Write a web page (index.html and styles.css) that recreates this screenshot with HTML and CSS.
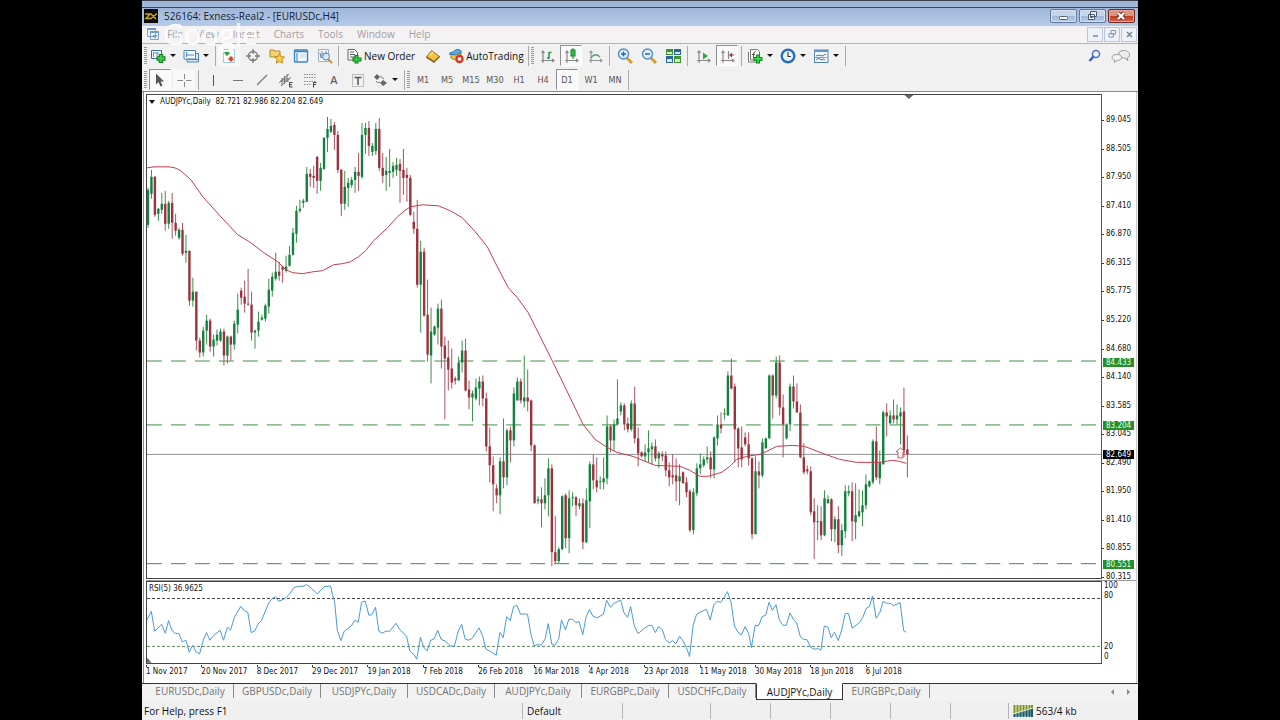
FILE: index.html
```html
<!DOCTYPE html>
<html lang="en">
<head>
<meta charset="utf-8">
<title>526164: Exness-Real2 - [EURUSDc,H4]</title>
<link rel="stylesheet" href="styles.css">
</head>
<body>
<main class="app">
  <div class="top-strip"></div>
  <header class="titlebar">
    <svg class="logo" viewBox="0 0 14 14"><rect width="14" height="14" fill="#0b0a05"/><path d="M1 5h5l-4 4.500h5L13 4.500M7 5l5 5" stroke="#c9a70c" stroke-width="1.500" fill="none"/></svg>
    <h1 class="title">526164: Exness-Real2 - [EURUSDc,H4]</h1>
    <div class="win-buttons">
      <button class="win" aria-label="Minimize"><svg viewBox="0 0 24 12"><rect x="8.500" y="6.500" width="8" height="3" rx="1" fill="#fff" stroke="#50607a"/></svg></button>
      <button class="win" aria-label="Restore"><svg viewBox="0 0 24 12"><path d="M10.500 1.500h6v5h-6zM8.500 4.500h6v5h-6z" fill="#eef3fa" stroke="#4a5970"/><path d="M10.500 6.500h2v1h-2z" stroke="#4a5970" fill="none"/></svg></button>
      <button class="win close" aria-label="Close"><svg viewBox="0 0 24 12"><path d="M9 3l6 6M15 3l-6 6" stroke="#5a3030" stroke-width="4"/><path d="M9 3l6 6M15 3l-6 6" stroke="#fff" stroke-width="2.400"/></svg></button>
    </div>
  </header>
  <nav class="menubar">
    <svg class="menu-icon" viewBox="0 0 14 14"><path d="M1.500 1.500h8v8h-8zM4.500 4.500h8v8h-8z" fill="#eef4fb" stroke="#7ba3cf"/><path d="M1 2h9M4 5h9" stroke="#6f9bd0" stroke-width="2"/><path d="M6 10l2-2 1 3 2-3" stroke="#6a8fb8" fill="none"/></svg>
    <button>File</button><button>View</button><button>Insert</button><button>Charts</button><button>Tools</button><button>Window</button><button>Help</button>
    <span class="watermark">Google</span>
    <div class="mdi">
      <button aria-label="Minimize chart"><svg viewBox="0 0 12 12"><path d="M4 8h5" stroke="#7789a3" stroke-width="1.500"/></svg></button>
      <button aria-label="Restore chart"><svg viewBox="0 0 12 12"><path d="M5 2.500h4.500v3.500h-4.500zM3 5.500h4.500v3.500h-4.500z" fill="#f4f7fb" stroke="#8595ab"/></svg></button>
      <button aria-label="Close chart"><svg viewBox="0 0 12 12"><path d="M4 4l5 5M9 4l-5 5" stroke="#73849b" stroke-width="1.500"/></svg></button>
    </div>
  </nav>
  <div class="toolbars">
    <div class="toolbar">
      <i class="grip"></i>
      <button class="dd" aria-label="New chart"><svg viewBox="0 0 16 16"><path d="M1.500 2.500h10v8h-10z" fill="#f4f9fd" stroke="#3e6f9c"/><path d="M3.500 4v5M7 4v4M3 5h6" stroke="#6f93b5" fill="none"/><path d="M11 6v9M6.500 10.500h9" stroke="#0c7a1c" stroke-width="4.500"/><path d="M11 7v7M7.500 10.500h7" stroke="#3bc94a" stroke-width="2.500"/></svg><b></b></button>
      <button class="dd" aria-label="Profiles"><svg viewBox="0 0 16 16"><path d="M4 5.500h11.500v8.500H4z" fill="#d8e8f5" stroke="#4d82b4"/><path d="M1 2.500h11.500v8.500H1z" fill="#f6fafd" stroke="#4d82b4"/><path d="M3.500 4v5M3 7h8M5 11.500h10" stroke="#4e83b7"/></svg><b></b></button>
      <i class="sep"></i>
      <button class="tb lit" aria-label="Market watch"><svg viewBox="0 0 16 16"><path d="M2.500 1.500h11v13h-11z" fill="#fff" stroke="#7fb0d8" stroke-dasharray="2 1"/><path d="M6 2l3.500 3.500H7.500v2h-3v-2H2.500z" fill="#26a13b"/><path d="M10 14l3.500-3.500H11.500v-2h-3v2H6.500z" fill="#d1462c"/></svg></button>
      <button class="tb" aria-label="Data window"><svg viewBox="0 0 16 16"><circle cx="8" cy="8" r="4.500" fill="none" stroke="#777" stroke-width="1.300"/><path d="M8 1v5M8 10v5M1 8h5M10 8h5" stroke="#777" stroke-width="1.300"/></svg></button>
      <button class="tb" aria-label="Navigator"><svg viewBox="0 0 16 16"><path d="M1 2h4l1 1h5v6H1z" fill="#f2d170" stroke="#b58b2a"/><path d="M10.500 5.500l1.500 3.200 3.500.4-2.600 2.400.7 3.500-3.100-1.700L7.400 15l.7-3.500-2.600-2.400 3.500-.4z" fill="#fbd244" stroke="#bd8417"/></svg></button>
      <button class="tb" aria-label="Terminal"><svg viewBox="0 0 16 16"><rect x="1.500" y="2" width="13" height="12" rx="1" fill="#f3faff" stroke="#3e84c2" stroke-width="1.400"/><path d="M2 3.500h12" stroke="#3e84c2" stroke-width="1.500"/><path d="M3 5h2v8H3z" fill="#7fbbe6"/><path d="M7 7h6M7 9h6" stroke="#c2d3e0"/></svg></button>
      <button class="tb" aria-label="Strategy tester"><svg viewBox="0 0 16 16"><path d="M1.500 1.500h10v12h-10z" fill="#f2f6fa" stroke="#9cb0c4"/><path d="M3 5l1 5M5 3v7M7 5v4M9 3v5" stroke="#6785a5"/><circle cx="9" cy="8.500" r="3.500" fill="#d7ebf8" fill-opacity=".8" stroke="#5b84b6"/><path d="M11.500 11.500l3.500 3.500" stroke="#c69033" stroke-width="2"/></svg></button>
      <i class="sep"></i>
      <button class="tb text order"><svg viewBox="0 0 16 16"><path d="M2 1.500h6.500l3 3V12H2z" fill="#fff" stroke="#666"/><path d="M4 4h4M4 6.500h5M4 9h5" stroke="#555"/><path d="M10.500 7v8.500M6.500 11.500h9" stroke="#0c7a1c" stroke-width="4"/><path d="M10.500 8v6.500M7.500 11.500h7" stroke="#3bc94a" stroke-width="2"/></svg>New Order</button>
      <button class="tb" aria-label="MetaEditor"><svg viewBox="0 0 16 16"><path d="M1.500 9l5-6.500 8 6-5.500 5.500z" fill="#f2c443" stroke="#a5731b"/><path d="M1.500 9l7.500 5 5.500-5.500" fill="none" stroke="#8d6317" stroke-width="1.600"/><path d="M5 8l3-4" stroke="#fff0b2"/></svg></button>
      <button class="tb text"><svg viewBox="0 0 16 16"><path d="M3 6l10-1v5q-5 4-10 0z" fill="#e6bf46" stroke="#a7812a"/><path d="M1 6q1-2 4-2 3-4 7-2 2 1 1 3-6 3-12 1z" fill="#5eaee0" stroke="#3077ad"/><circle cx="11.500" cy="11" r="4.200" fill="#d93120"/><rect x="9.800" y="9.500" width="3.400" height="3" fill="#fff"/></svg>AutoTrading</button>
      <i class="sep"></i><i class="grip"></i>
      <button class="tb" aria-label="Bar chart"><svg viewBox="0 0 16 16"><path d="M4 3v12M2 12.500h13M2.500 5L4 3l1.500 2M13 11l2 1.500-2 1.500" fill="none" stroke="#888" stroke-width="1.200"/><path d="M10 4v7M8 10h2M10 4.500h2.500" stroke="#2d9445" stroke-width="1.500"/></svg></button>
      <button class="tb pressed" aria-label="Candlesticks"><svg viewBox="0 0 16 16"><path d="M4 3v12M2 12.500h13M2.500 5L4 3l1.500 2M13 11l2 1.500-2 1.500" fill="none" stroke="#888" stroke-width="1.200"/><path d="M10 0v11" stroke="#187a2d"/><rect x="8" y="2" width="4" height="6" fill="#33bd4c" stroke="#187a2d"/></svg></button>
      <button class="tb" aria-label="Line chart"><svg viewBox="0 0 16 16"><path d="M4 3v12M2 12.500h13M2.500 5L4 3l1.500 2M13 11l2 1.500-2 1.500" fill="none" stroke="#999" stroke-width="1.200"/><path d="M4 10q4-6 9-1" fill="none" stroke="#5a9c67" stroke-width="1.300"/></svg></button>
      <i class="sep wide"></i>
      <button class="tb" aria-label="Zoom in"><svg viewBox="0 0 16 16"><path d="M10 10l5 5" stroke="#d3a02c" stroke-width="3"/><circle cx="6.500" cy="6" r="5" fill="#dff0fc" stroke="#4f8ccb" stroke-width="1.400"/><path d="M6.500 3.500v5M4 6h5" stroke="#2a66ae" stroke-width="1.500"/></svg></button>
      <button class="tb" aria-label="Zoom out"><svg viewBox="0 0 16 16"><path d="M10 10l5 5" stroke="#d3a02c" stroke-width="3"/><circle cx="6.500" cy="6" r="5" fill="#dff0fc" stroke="#4f8ccb" stroke-width="1.400"/><path d="M4 6h5" stroke="#2a66ae" stroke-width="1.500"/></svg></button>
      <button class="tb" aria-label="Tile windows"><svg viewBox="0 0 16 16"><path d="M1 1h7v6H1zM9 8h7v7H9z" fill="#3f9430"/><path d="M9 1h7v6H9zM1 8h7v7H1z" fill="#2c64a8"/><path d="M2 4h5v2H2zM10 4h5v2h-5zM2 11h5v3H2zM10 11h5v3h-5z" fill="#d8ecd4"/></svg></button>
      <i class="sep wide"></i>
      <button class="tb" aria-label="Auto scroll"><svg viewBox="0 0 16 16"><path d="M4 3v12M2 12.500h13M2.500 5L4 3l1.500 2M13 11l2 1.500-2 1.500" fill="none" stroke="#888" stroke-width="1.200"/><path d="M8 4.500l5 3.500-5 3.500z" fill="#35a44b"/></svg></button>
      <button class="tb pressed" aria-label="Chart shift"><svg viewBox="0 0 16 16"><path d="M4 3v12M2 12.500h13M2.500 5L4 3l1.500 2M13 11l2 1.500-2 1.500M9.500 3v8" fill="none" stroke="#888" stroke-width="1.200"/><path d="M15 7h-3" stroke="#a33"/><path d="M10 7l3-2.500v5z" fill="#a33b3b"/></svg></button>
      <i class="sep wide"></i>
      <button class="dd" aria-label="Indicators"><svg viewBox="0 0 16 16"><path d="M3.500 1.500h7l2 2V12h-9zM1.500 4v10h8" fill="#fff" stroke="#777"/><path d="M8.500 3.500q-2 0-2 3v4M5 6.500h3" fill="none" stroke="#555"/><path d="M11 6.500v9M6.500 11h9" stroke="#0c8a1c" stroke-width="4"/><path d="M11 7.500v7M7.500 11h7" stroke="#3bd04a" stroke-width="2"/></svg><b></b></button>
      <button class="dd" aria-label="Periods"><svg viewBox="0 0 16 16"><circle cx="8" cy="8" r="6.300" fill="#e9f5fd" stroke="#2a6eb8" stroke-width="2.400"/><path d="M8 4v4.500h3" fill="none" stroke="#345" stroke-width="1.200"/></svg><b></b></button>
      <button class="dd" aria-label="Templates"><svg viewBox="0 0 16 16"><rect x="1.500" y="2" width="13.500" height="12.500" fill="#f2f8fc" stroke="#5386b4"/><path d="M1.500 3h13.500" stroke="#5c96cb" stroke-width="2"/><path d="M3 8l3-1 3 1 4-2M3 12l3-2 2 2 2-1 2 1" fill="none" stroke="#56789a"/><path d="M2 9.500h12" stroke="#7eb07f"/></svg><b></b></button>
      <i class="sep"></i>
      <span class="spacer"></span>
      <button class="tb" aria-label="Search"><svg viewBox="0 0 16 16"><circle cx="9" cy="6" r="3.500" fill="#f3f7ff" stroke="#4a70c8" stroke-width="1.500"/><path d="M6.500 8.500L2.500 13" stroke="#3158b8" stroke-width="2.200"/></svg></button>
      <button class="tb chat" aria-label="Chat"><svg viewBox="0 0 20 16"><path d="M12 2.500c4 0 6.500 1.500 6.500 4S17 10 16 10l1 2.500L13.500 10C9 10 7.500 8.500 7.500 6.500s1.500-4 4.500-4z" fill="#eee" stroke="#999"/><path d="M6 6.500c3 0 4.500 1 4.500 3s-2 3-4.500 3L3.500 14.500l0-2.500C2 11.500 1 11 1 9.500c0-2 2-3 5-3z" fill="#f5f5f5" stroke="#999"/></svg></button>
    </div>
    <div class="toolbar">
      <i class="grip"></i>
      <button class="tb pressed" aria-label="Cursor"><svg viewBox="0 0 16 16"><path d="M4 1.500v11l2.500-2.500 2 4.500 2-1-2-4h3.500z" fill="#555"/></svg></button>
      <button class="tb lit" aria-label="Crosshair"><svg viewBox="0 0 16 16"><path d="M8.500 2v5M8.500 10v5M1.500 8.500H7M10 8.500h5.500" stroke="#888"/></svg></button>
      <i class="sep wide"></i>
      <button class="tb" aria-label="Vertical line"><svg viewBox="0 0 16 16"><path d="M7.500 3v11" stroke="#555"/></svg></button>
      <button class="tb" aria-label="Horizontal line"><svg viewBox="0 0 16 16"><path d="M3 8.500h10" stroke="#777"/></svg></button>
      <button class="tb" aria-label="Trendline"><svg viewBox="0 0 16 16"><path d="M3 13L13 3" stroke="#777" stroke-width="1.200"/></svg></button>
      <button class="tb" aria-label="Equidistant channel"><svg viewBox="0 0 16 16"><path d="M1 11l10-9M3 14l10-9M4 6v7M6.500 4v8M9 2v8M2 9h9M4 7h8" stroke="#777"/><path d="M14.500 10.500h-3v4.500h3M11.500 12.700h2.500" fill="none" stroke="#444"/></svg></button>
      <button class="tb" aria-label="Fibonacci retracement"><svg viewBox="0 0 16 16"><path d="M2 2.500h12M2 5.500h12M2 9.500h12M2 12.500h7" stroke="#888" stroke-dasharray="1.500 1"/><path d="M11.500 15.500v-5h3M11.500 12.500h2.500" fill="none" stroke="#444"/></svg></button>
      <button class="tb bold">A</button>
      <button class="tb" aria-label="Text label"><svg viewBox="0 0 16 16"><rect x="2.500" y="2.500" width="11" height="12" fill="none" stroke="#888" stroke-dasharray="1 1"/><path d="M4.500 5.500h7M8 5v8" stroke="#555" stroke-width="1.500"/></svg></button>
      <button class="dd" aria-label="Arrows"><svg viewBox="0 0 16 16"><path d="M2 5l3-3 3 3-3 3zM8 11l3-3 4 3-4 3z" fill="#666"/><path d="M4 9q1 3 4 1M8 4l4 3" fill="none" stroke="#777"/></svg><b></b></button>
      <i class="sep"></i><i class="grip"></i>
      <button class="tb tf">M1</button><button class="tb tf">M5</button><button class="tb tf">M15</button><button class="tb tf">M30</button><button class="tb tf">H1</button><button class="tb tf">H4</button><button class="tb tf pressed">D1</button><button class="tb tf">W1</button><button class="tb tf">MN</button>
      <i class="sep"></i>
    </div>
  </div>

  <section class="chart">
    <div class="pane price">
      <div class="plot">
        <svg class="drawing" viewBox="146 95 956 484" preserveAspectRatio="none">
          <path class="level" d="M146 361.500H1102M146 425.500H1102M146 564.500H1102"/>
          <path class="bid" d="M146 455H1102"/>
          <g id="candles"></g>
          <polyline class="ma" points="146,168 153,167 168,167 174,168 180,171 190,180 202,197 220,217 237,235 250,243 263,253 277,262 285,270 292,273 302,274 313,272 322,271 333,265 342,264 350,262 358,257 365,251 373,241 387,228 397,217 404,211 410,207 422,205 438,206 450,211 462,218 475,232 487,247 497,267 508,288 517,298 528,313 552,361 583,425 595,440 607,448 617,453 633,457 655,466 680,467 690,471 700,477 708,477 722,473 730,467 737,460 747,457 760,455 767,452 777,447 793,446 805,447 823,454 840,460 857,463 880,463 893,461 900,462 907,464"/>
          <path class="signal" d="M901 448.500l4.500 4h-2v6h-5v-6h-2z"/>
          <path d="M905 95h9l-4.500 4z" fill="#666"/>
        </svg>
        <p class="caption"><b></b>AUDJPYc,Daily&nbsp; 82.721 82.986 82.204 82.649</p>
      </div>
      <div class="axis">
        <span>89.045</span><span>88.505</span><span>87.950</span><span>87.410</span><span>86.870</span><span>86.315</span><span>85.775</span><span>85.220</span><span>84.680</span><span>84.140</span><span>83.585</span><span>83.045</span><span>82.490</span><span>81.950</span><span>81.410</span><span>80.855</span><span>80.315</span>
        <em class="tag t1">84.433</em><em class="tag t2">83.204</em><em class="tag t3">82.649</em><em class="tag t4">80.551</em>
      </div>
    </div>
    <div class="pane rsi">
      <div class="plot">
        <svg class="drawing" viewBox="18 36 2868 243" preserveAspectRatio="none">
          <path class="bound" d="M18 85.500H2886"/><path class="bound low" d="M18 229.500H2886"/>
          <polyline class="osc" points="18,150 31,124 41,184 62,163 73,190 83,152 93,182 103,190 114,191 124,216 135,211 145,247 155,226 166,247 176,252 187,211 197,188 207,211 218,197 238,181 248,211 260,171 269,181 281,142 300,109 311,123 321,127 331,188 342,183 352,162 362,152 384,99 394,86 404,80 414,94 432,86 446,73 460,53 472,49 487,49 497,44 508,51 530,72 551,50 570,48 575,72 582,95 590,180 601,212 611,184 632,168 643,151 653,157 663,97 674,93 685,136 694,134 705,112 715,184 725,190 736,184 747,184 767,160 777,178 798,198 808,243 819,252 829,268 840,202 850,232 860,243 871,211 881,207 892,181 902,208 915,214 930,228 942,229 954,183 964,163 974,206 984,211 995,206 1016,174 1027,198 1037,238 1048,243 1068,256 1079,188 1089,203 1099,140 1110,152 1120,110 1130,106 1141,133 1152,132 1162,133"/>
          <polyline class="osc" transform="translate(1140)" points="22,133 32,193 42,228 52,224 63,226 75,207 84,161 95,223 105,226 116,206 124,150 136,180 146,148 158,148 167,158 177,155 188,194 198,141 208,119 218,138 230,144 250,133 260,91 271,112 281,101 302,90 312,129 323,142 332,110 343,168 354,191 375,174 386,167 396,166 406,188 416,170 427,179 437,209 448,219 458,212 468,222 479,199 489,212 499,232 509,260 520,165 530,134 540,127 560,118 571,150 582,105 592,94 603,97 613,81 623,65 634,97 644,168 655,187 665,195 676,170 687,192 695,233 706,167 717,167 727,140 738,136 748,97 758,121 769,104 779,150 790,166 800,166 811,129 821,148 831,159 842,200 852,209 862,209 873,232 884,238 895,236 904,241 914,168 925,172 935,203 945,187 956,212 967,178 977,131 987,131 998,175 1010,165 1020,158 1030,142 1040,115 1050,110 1059,78 1070,145 1081,128 1091,94 1101,100 1112,100 1122,107 1142,98 1153,183 1160,187"/>
          <path d="M18 264l14 15H18z" fill="#666"/>
        </svg>
        <p class="caption">RSI(5) 36.9625</p>
      </div>
      <div class="axis"><span>100</span><span>80</span><span class="gap">20</span><span>0</span></div>
    </div>
    <div class="dates">
      <span>1 Nov 2017</span><span>20 Nov 2017</span><span>8 Dec 2017</span><span>29 Dec 2017</span><span>19 Jan 2018</span><span>7 Feb 2018</span><span>26 Feb 2018</span><span>16 Mar 2018</span><span>4 Apr 2018</span><span>23 Apr 2018</span><span>11 May 2018</span><span>30 May 2018</span><span>18 Jun 2018</span><span>6 Jul 2018</span>
    </div>
  </section>

  <nav class="tabs">
    <button>EURUSDc,Daily</button><button>GBPUSDc,Daily</button><button>USDJPYc,Daily</button><button>USDCADc,Daily</button><button>AUDJPYc,Daily</button><button>EURGBPc,Daily</button><button>USDCHFc,Daily</button><button class="active">AUDJPYc,Daily</button><button>EURGBPc,Daily</button>
    <div class="scroll"><button class="left" aria-label="Scroll left"></button><button class="right" aria-label="Scroll right"></button></div>
  </nav>
  <footer class="status">
    <span class="help">For Help, press F1</span><span class="profile">Default</span><span class="c3"></span><span class="c4"></span><span class="c4"></span><span class="c4"></span><span class="c4"></span><span class="c5"></span>
    <span class="net"><svg viewBox="0 0 20 12"><path d="M1.500 0v11M4.500 0v11M7.500 0v11M10.500 0v11M13.500 0v11M16.500 0v11M19 0v11" stroke="#7d9417" stroke-width="2"/><path d="M1.500 9v3M4.500 8v4M7.500 7v5M10.500 6v6M13.500 5v7M16.500 4v8M19 3v9" stroke="#155a80" stroke-width="2"/><path d="M0 9l20-6" stroke="#e4ecd0"/></svg>563/4 kb</span>
  </footer>
</main>
<script src="chart.js"></script>
</body>
</html>
```

FILE: styles.css
```css
* { box-sizing: border-box; }
body { margin: 0; background: #000; font-family: "Open Sans", "Noto Sans", sans-serif; font-size: 11px; color: #111; }
button { font: inherit; color: inherit; background: none; border: 0; padding: 0; margin: 0; }
svg { display: block; }
.app { max-width: 996px; height: 100vh; min-height: 480px; margin: 0 auto; display: flex; flex-direction: column; background: #f0f0f0; }
.top-strip { height: 8px; flex: none; background: #9db5d6; border-top: 1px solid #3d3f4c; border-bottom: 1px solid #3b4658; }

.titlebar { height: 18px; flex: none; display: flex; align-items: center; padding: 0 3px 2px 2px; background: linear-gradient(#a1b7da, #b4cbe8); }
.logo { width: 14px; height: 14px; }
.title { flex: 1; margin: 0 0 0 6px; font-size: 10px; font-weight: 400; line-height: 16px; color: #15202e; }
.win-buttons { display: flex; gap: 2px; }
.win { width: 27px; height: 14px; border: 1px solid #62779a; border-radius: 2px; background: linear-gradient(#c5d5ea 50%, #9fb6d6 50%, #b8cce6); box-shadow: inset 0 0 0 1px #d4e0f0; }
.win svg { width: 24px; height: 12px; }
.close { border-color: #6b2b28; background: linear-gradient(#e0937f 50%, #c23d23 50%, #d5664a); box-shadow: inset 0 0 0 1px #e9a797; }

.menubar { position: relative; height: 18px; flex: none; display: flex; align-items: center; padding: 0 0 1px 4px; background: #f5f2f3; border-bottom: 1px solid #b1b4b1; color: #a09ea0; font-size: 10px; }
.menu-icon { width: 14px; height: 14px; }
.menubar > button { padding: 0 7px; line-height: 16px; }
.watermark { position: absolute; left: 21px; top: -8px; font-size: 29px; line-height: 32px; color: #fff; opacity: .9; }
.mdi { margin-left: auto; display: flex; gap: 1px; padding-right: 1px; }
.mdi button { width: 16px; height: 15px; border: 1px solid #b9c6d8; background: #edf2fa; }
.mdi svg { width: 12px; height: 12px; margin: 0 auto; }

.toolbars { flex: none; display: grid; gap: 1px; background: #f2f1f1; border-bottom: 1px solid #8b8b8b; }
.toolbar { height: 23px; display: flex; align-items: center; gap: 2px; padding: 0 4px 0 2px; }
.grip { width: 3px; height: 18px; background: repeating-linear-gradient(#999 0 1px, #f2f1f1 1px 2px); }
.sep { width: 1px; height: 20px; background: #aaa; }
.wide { margin: 0 2px 0 1px; }
.tb { width: 22px; height: 21px; flex: none; display: flex; align-items: center; justify-content: center; border: 1px solid transparent; }
.tb svg, .dd svg { width: 16px; height: 16px; flex: none; }
.dd { width: 31px; height: 21px; flex: none; display: flex; align-items: center; gap: 4px; padding-left: 1px; }
.dd b { border: 3px solid transparent; border-top-color: #111; border-bottom: 0; }
.pressed { background: #f9f9f9; border-color: #8e8e8e #fff #fff #8e8e8e; }
.lit { background: #f8f8f8; }
.text { width: auto; gap: 2px; padding: 0 1px; font-size: 10px; }
.order { padding: 0 4px; }
.bold { font-weight: 600; color: #666; }
.tf { font-family: "DejaVu Sans Condensed", sans-serif; font-size: 9px; color: #555; }
.spacer { flex: 1; }
.chat { width: 26px; }
.chat svg { width: 20px; }

.chart { flex: 1; min-height: 0; margin: 0 1px; padding: 2px 0 0 2px; display: flex; flex-direction: column; background: #fff; border-left: 1px solid #8b8b8b; border-right: 1px solid #ccc; font-family: "DejaVu Sans Condensed", sans-serif; font-size: 8px; }
.pane { display: flex; min-height: 0; }
.price { flex: 486; }
.rsi { flex: 83; margin-top: 1px; border-top: 1px solid #999; }
.plot { position: relative; flex: 1; border: 1px solid #444; border-right-color: #555; min-width: 0; }
.drawing { position: absolute; inset: 0; width: 100%; height: 100%; }
.caption { position: relative; margin: 2px 0 0 2px; display: flex; align-items: center; line-height: 10px; white-space: pre; }
.caption b { border: 3px solid transparent; border-top: 4px solid #111; border-bottom: 0; margin: 0 5px 0 0; }
.level { fill: none; stroke: #3f8f45; stroke-dasharray: 15 9; }
.bid { stroke: #8d9094; fill: none; }
.ma { fill: none; stroke: #c83a4c; stroke-width: 1; }
.signal { fill: #fff; stroke: #d0505a; }
.up { fill: #12803f; }
.down { fill: #9b323c; }
.up-wick { fill: #3b9149; }
.down-wick { fill: #ab5461; }
.bound, .osc { fill: none; vector-effect: non-scaling-stroke; stroke-width: 1; }
.bound { stroke: #444; stroke-dasharray: 3 2; }
.low { stroke: #5b8a5b; }
.osc { stroke: #4b9ad6; }

.axis { position: relative; width: 34px; flex: none; display: flex; flex-direction: column; justify-content: space-between; line-height: 10px; padding-left: 4px; }
.price .axis { padding-top: 21px; margin-bottom: -3px; }
.price .axis span::before { content: ""; float: left; width: 2px; height: 1px; margin: 5px 0 0 -4px; background: #333; }
.rsi .axis { justify-content: flex-start; padding: 0 0 2px 2px; }
.rsi .gap { margin-top: auto; }
.tag { position: absolute; left: 1px; width: 31px; height: 9px; padding-left: 3px; line-height: 9px; font-style: normal; color: #e8ffe8; background: #259029; }
.t1 { top: 54%; }
.t2 { top: 67%; }
.t3 { top: 73%; background: #000; color: #fff; }
.t4 { bottom: 13px; }

.dates { height: 19px; flex: none; display: grid; grid-template-columns: repeat(14, 1fr); padding-right: 215px; line-height: 10px; white-space: nowrap; }
.dates span { padding-top: 1px; }
.dates span::before { content: ""; display: block; width: 1px; height: 2px; background: #333; }

.tabs { height: 17px; flex: none; display: flex; border-top: 1px solid #333; padding-left: 5px; color: #747474; background: #f2f2f2; font-size: 10px; }
.tabs > button { flex: none; width: 87px; line-height: 14px; border-right: 1px solid #888; margin-bottom: 2px; }
.tabs > .active { margin: -1px 0 0; color: #111; background: #fff; border: 1px solid #333; border-top-color: #fff; }
.scroll { margin-left: auto; display: flex; align-items: center; gap: 13px; padding-right: 8px; }
.scroll button { border: 3px solid transparent; }
.scroll .left { border-right-color: #888; border-left: 0; }
.scroll .right { border-left-color: #888; border-right: 0; }

.status { height: 20px; flex: none; display: flex; align-items: stretch; padding: 3px 0 1px 2px; background: #f0f0f0; font-size: 10px; line-height: 16px; }
.status span { border-right: 1px solid #b5b5b5; }
.help { width: 379px; }
.profile { width: 100px; padding-left: 4px; }
.c3 { width: 88px; }
.c4 { width: 60px; }
.c5 { width: 58px; }
.status .net { display: flex; align-items: center; gap: 3px; padding-left: 4px; border: 0; }
.net svg { width: 20px; height: 12px; }
```

FILE: chart.js
```js
// Each bar: direction, high, body top, body bottom, low (chart units, downwards).
const bars = `u 188 190 225 228;u 170 177 194 199;d 176 177 215 217;u 208 209 214 221;u 193 204 210 214;d 191 204 224 231;u 201 203 224 229;d 193 203 223 239;d 214 223 231 236;u 228 230 238 240
d 223 230 254 256;u 235 251 253 263;d 251 251 301 306;u 278 292 301 307;d 292 292 341 351;d 338 341 353 358;u 327 331 353 357;u 315 321 331 345;d 319 321 347 352;u 335 340 347 357
u 330 335 341 346;u 329 332 341 342;d 329 332 356 366;u 336 337 356 364;d 336 337 345 361;u 321 324 345 350;u 294 310 325 334;d 288 291 298 305;d 281 297 304 313;d 269 304 305 306
d 292 305 333 341;u 330 331 333 349;u 312 322 331 337;u 315 318 320 321;u 304 306 319 322;u 279 290 307 314;u 273 277 291 297;u 253 272 279 281;d 262 272 276 281;d 266 267 270 283
u 256 267 271 273;u 246 255 266 267;u 228 233 255 256;u 206 211 234 243;u 200 209 211 213;u 199 201 203 208;u 167 174 202 202;d 169 174 177 187;d 166 176 178 188;d 156 157 181 194
u 163 168 181 191;u 137 138 169 170;u 117 129 138 152;u 119 126 132 133;d 122 125 135 150;d 131 135 170 173;d 169 170 204 216;u 171 187 204 210;u 178 183 188 207;u 177 180 185 188
u 167 172 180 193;d 153 172 176 191;u 123 135 177 179;u 123 128 135 154;d 121 128 146 156;u 143 146 152 156;u 123 129 151 155;d 118 129 168 171;d 153 168 176 183;u 157 171 175 191
u 149 171 173 187;u 162 166 172 178;u 158 165 170 176;d 159 164 171 203;d 149 170 178 195;d 168 175 178 202;d 175 178 215 216;d 212 222 229 234;d 200 229 285 288;u 241 252 285 333
d 248 252 316 317;d 280 315 355 362;u 308 332 356 384;u 326 327 335 336;u 304 309 328 345;d 300 309 347 369;d 337 346 359 420;d 341 358 370 391;d 349 369 383 389;d 377 379 381 385
u 357 363 381 381;u 341 351 363 373;d 339 351 391 392;d 381 390 398 410;u 391 394 398 422;u 379 388 399 401;u 377 382 389 406;d 376 382 399 407;d 393 399 447 452;d 428 447 466 483
d 457 466 485 512;d 485 489 496 504;u 458 462 496 515;d 419 462 478 489;u 429 431 478 486;d 427 431 441 463;u 388 394 441 447;u 378 382 401 401;d 379 382 401 404;u 356 398 402 408
d 370 398 402 412;d 400 401 446 452;d 445 446 504 504;u 497 500 502 505;d 488 500 504 528;u 479 496 504 510;u 459 469 496 517;d 465 469 553 567;d 517 553 562 565;u 548 550 562 564
u 496 497 550 551;d 494 496 539 549;u 491 499 539 554;u 493 498 499 507;d 497 498 506 517;u 499 504 507 510;d 499 504 543 550;u 489 501 543 544;u 462 465 502 529;d 455 465 481 490
d 458 481 488 493;u 477 482 483 490;u 458 479 483 490;u 416 427 479 485;d 425 427 441 453;u 420 425 441 452;u 380 419 425 426;u 403 406 412 416;d 404 406 425 431;d 418 424 430 433
u 401 404 430 432;d 387 404 439 444;d 428 439 454 467;d 452 453 457 458;u 445 453 457 462;u 431 449 453 463;u 443 447 450 465;d 440 447 459 462;u 452 454 459 469;d 452 455 457 462
d 452 456 471 477;d 463 471 478 487;d 455 476 478 485;d 459 476 482 502;u 465 477 482 506;d 472 473 484 484;d 478 483 493 498;d 490 492 531 533;u 489 493 531 535;u 464 469 494 497
u 454 465 469 475;u 457 460 466 468;u 447 458 460 464;d 452 458 470 479;u 437 438 470 479;u 416 425 439 446;d 413 425 429 434;u 409 414 415 420;u 372 376 416 416;d 359 376 389 390
d 384 387 430 463;d 428 429 449 468;d 427 448 460 468;d 433 438 445 447;d 433 445 459 466;d 458 459 535 540;u 457 472 535 535;d 462 472 476 489;u 439 443 476 478;u 438 439 449 449
u 375 376 439 439;d 375 376 396 419;u 357 363 396 399;d 356 363 408 416;d 395 408 425 458;u 424 425 439 440;u 384 387 425 432;d 376 387 402 409;d 384 402 413 413;d 405 413 458 459
d 444 458 473 475;d 466 470 472 475;d 467 472 513 516;d 499 512 523 560;u 506 522 523 541;d 507 522 536 541;u 491 499 536 537;u 496 500 504 504;d 499 500 530 542;u 517 520 530 543
d 507 520 546 554;u 525 531 546 557;u 486 492 532 539;u 486 492 494 497;d 483 492 522 542;u 484 516 523 540;u 490 512 517 518;u 491 506 513 527;u 475 485 506 510;u 481 482 487 488
u 440 442 483 485;d 427 442 478 481;u 451 463 479 485;u 411 413 465 465;d 404 413 417 437;u 411 416 424 424;d 400 416 420 424;u 405 416 420 425;u 408 413 417 445;d 388 412 451 458
d 436 450 455 478`;

const NS = "http://www.w3.org/2000/svg";
const FIRST_X = 147;
const STEP = 3.459;
const layer = document.getElementById("candles");

function addRect(cls, x, y, width, height) {
  const rect = document.createElementNS(NS, "rect");
  rect.setAttribute("class", cls);
  rect.setAttribute("x", x.toFixed(2));
  rect.setAttribute("y", y);
  rect.setAttribute("width", width);
  rect.setAttribute("height", Math.max(height, 1));
  layer.appendChild(rect);
}

bars.split(/[;\n]/).forEach((bar, i) => {
  const [dir, ...values] = bar.trim().split(" ");
  const [high, top, bottom, low] = values.map(Number);
  const x = FIRST_X + STEP * i;
  const cls = dir === "u" ? "up" : "down";
  addRect(cls + "-wick", x - 0.5, high, 1, low - high);
  addRect(cls, x - 1.2, top, 2.4, bottom - top);
});
```
